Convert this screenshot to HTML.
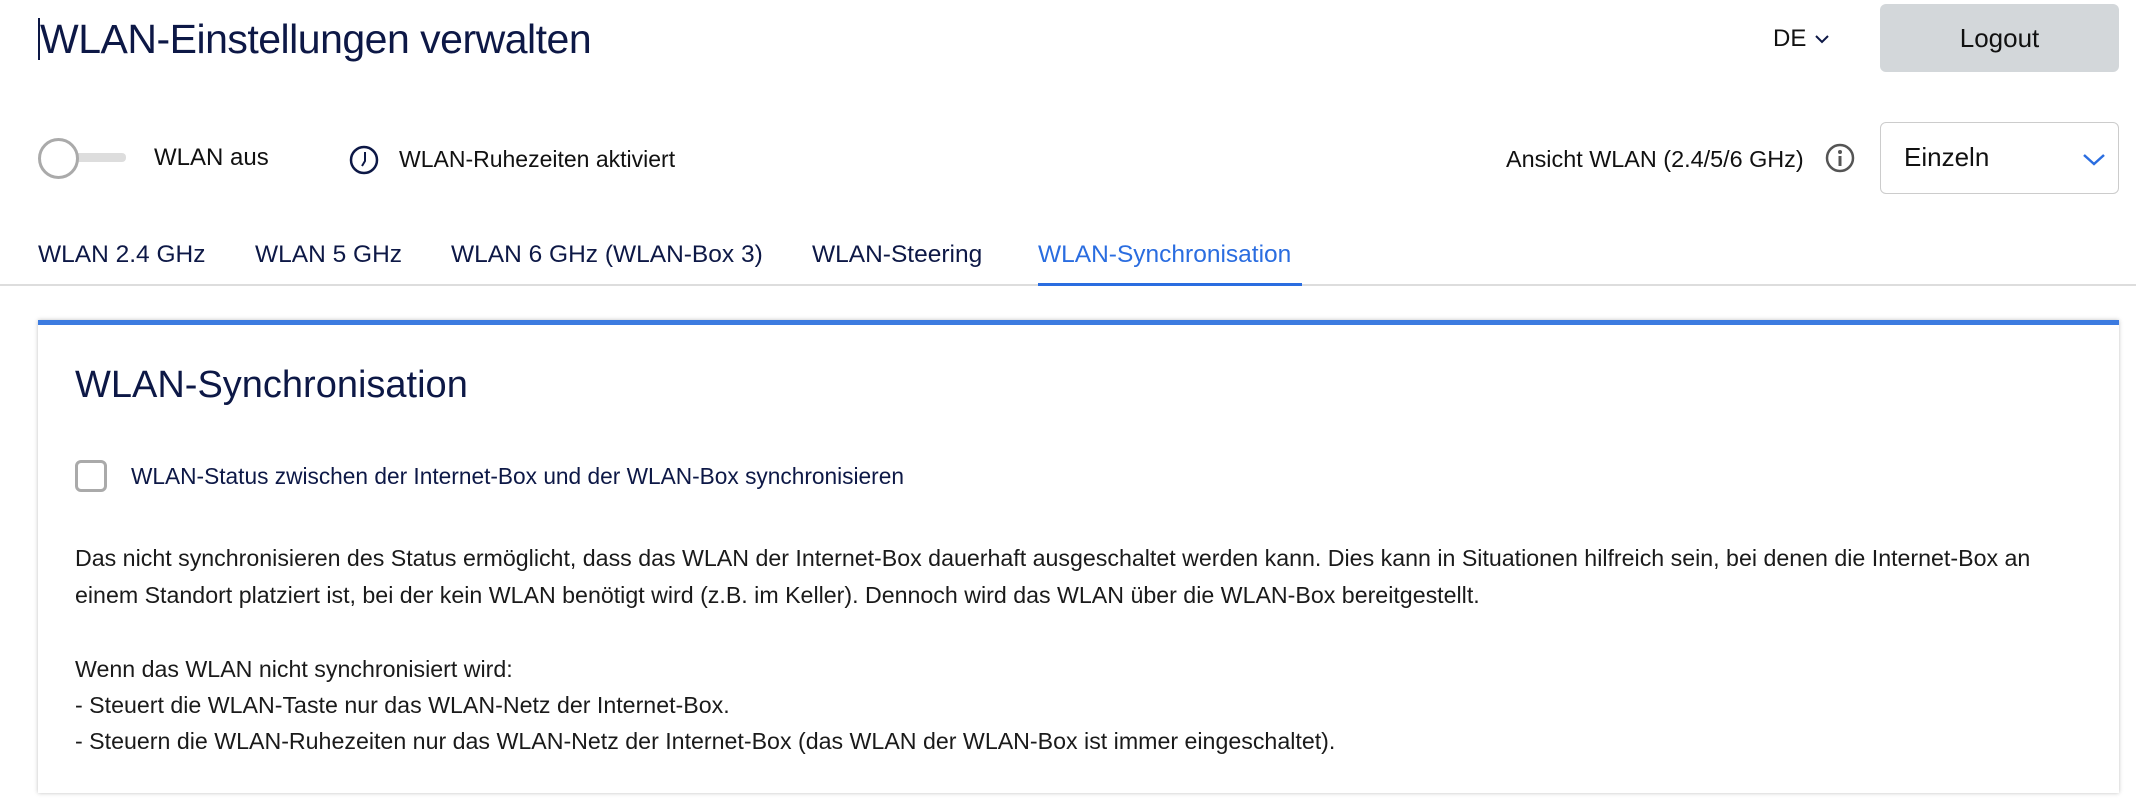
<!DOCTYPE html>
<html><head><meta charset="utf-8"><style>
*{margin:0;padding:0;box-sizing:border-box}
body{width:2136px;height:808px;background:#fff;font-family:"Liberation Sans",sans-serif;color:#0d1846;position:relative;overflow:hidden}
.a{position:absolute;white-space:nowrap}
.tab{position:absolute;top:241px;font-size:24.5px;color:#0d1846}
p.l{position:absolute;left:75px;font-size:23.2px;color:#1a1a1a;white-space:nowrap}
</style></head><body>
<div class="a" style="left:38px;top:18px;width:2px;height:42px;background:#0d1846"></div>
<div class="a" style="left:40px;top:16px;font-size:41px;letter-spacing:-0.5px">WLAN-Einstellungen verwalten</div>
<div class="a" style="left:1773px;top:25px;font-size:24px;color:#111">DE</div>
<svg class="a" style="left:1814px;top:33px" width="16" height="12"><path d="M2 3l6 6 6-6" fill="none" stroke="#0d1846" stroke-width="2"/></svg>
<div class="a" style="left:1880px;top:4px;width:239px;height:68px;background:#d3d7da;border-radius:6px;font-size:26px;color:#111;text-align:center;line-height:68px">Logout</div>

<div class="a" style="left:56px;top:153px;width:70px;height:9px;background:#ddd;border-radius:4px"></div>
<div class="a" style="left:38px;top:138px;width:41px;height:41px;border:3px solid #aaa;border-radius:50%;background:#fff"></div>
<div class="a" style="left:154px;top:144px;font-size:24px;color:#111">WLAN aus</div>
<svg class="a" style="left:348px;top:144px" width="32" height="32"><circle cx="16" cy="16" r="13" fill="none" stroke="#0d1846" stroke-width="2.5"/><path d="M17 8v9l-3 5" fill="none" stroke="#0d1846" stroke-width="2"/></svg>
<div class="a" style="left:399px;top:146px;font-size:23px;color:#111">WLAN-Ruhezeiten aktiviert</div>

<div class="a" style="left:1506px;top:146px;font-size:23.4px;color:#111">Ansicht WLAN (2.4/5/6 GHz)</div>
<svg class="a" style="left:1824px;top:142px" width="32" height="32"><circle cx="16" cy="16" r="13" fill="none" stroke="#555" stroke-width="2.5"/><circle cx="16" cy="10" r="2" fill="#555"/><rect x="14.5" y="14" width="3" height="10" fill="#555"/></svg>
<div class="a" style="left:1880px;top:122px;width:239px;height:72px;border:1px solid #ccc;border-radius:6px;font-size:26px;color:#111;padding:19px 0 0 23px">Einzeln</div>
<svg class="a" style="left:2082px;top:152px" width="24" height="14"><path d="M2 3l10 9 10-9" fill="none" stroke="#2a6de0" stroke-width="2.5"/></svg>

<div class="tab" style="left:38px">WLAN 2.4 GHz</div>
<div class="tab" style="left:255px">WLAN 5 GHz</div>
<div class="tab" style="left:451px">WLAN 6 GHz (WLAN-Box 3)</div>
<div class="tab" style="left:812px">WLAN-Steering</div>
<div class="tab" style="left:1038px;color:#2a6de0">WLAN-Synchronisation</div>
<div class="a" style="left:0;top:284px;width:2136px;height:2px;background:#ddd"></div>
<div class="a" style="left:1038px;top:283px;width:264px;height:3px;background:#2a6de0"></div>

<div class="a" style="left:38px;top:320px;width:2081px;height:473px;border-top:5px solid #3c7be0;box-shadow:0 0 4px rgba(0,0,0,.25);background:#fff"></div>
<div class="a" style="left:75px;top:364px;font-size:38px">WLAN-Synchronisation</div>
<div class="a" style="left:75px;top:460px;width:32px;height:32px;border:3px solid #aaa;border-radius:6px"></div>
<div class="a" style="left:131px;top:463px;font-size:22.7px;color:#0d1846">WLAN-Status zwischen der Internet-Box und der WLAN-Box synchronisieren</div>
<p class="l" style="top:545px">Das nicht synchronisieren des Status ermöglicht, dass das WLAN der Internet-Box dauerhaft ausgeschaltet werden kann. Dies kann in Situationen hilfreich sein, bei denen die Internet-Box an</p>
<p class="l" style="top:582px">einem Standort platziert ist, bei der kein WLAN benötigt wird (z.B. im Keller). Dennoch wird das WLAN über die WLAN-Box bereitgestellt.</p>
<p class="l" style="top:656px">Wenn das WLAN nicht synchronisiert wird:</p>
<p class="l" style="top:692px">- Steuert die WLAN-Taste nur das WLAN-Netz der Internet-Box.</p>
<p class="l" style="top:728px">- Steuern die WLAN-Ruhezeiten nur das WLAN-Netz der Internet-Box (das WLAN der WLAN-Box ist immer eingeschaltet).</p>
</body></html>
